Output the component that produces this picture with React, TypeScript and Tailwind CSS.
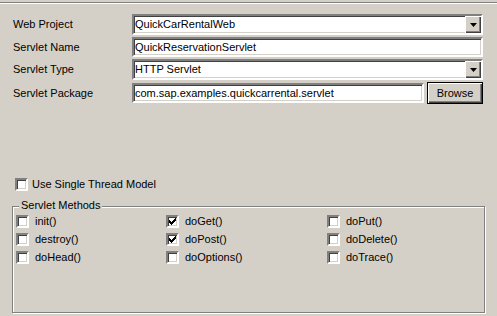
import type { ReactNode } from "react";

const sunken =
    "border-2 border-t-[#808080] border-l-[#808080] border-r-white border-b-white shadow-[inset_1px_1px_0_#404040,inset_-1px_-1px_0_#d4d0c8]";

const Combo = ({ value }: { value: string }) => (
    <div className={`flex-1 h-[21px] bg-white flex items-center ${sunken}`}>
        <span className="flex-1 pl-[1px] whitespace-nowrap">{value}</span>
        <div className="w-[16px] h-[17px] bg-[#d4d0c8] flex items-center justify-center shadow-[inset_1px_1px_0_#ffffff,inset_-1px_-1px_0_#404040,inset_-2px_-2px_0_#808080]">
            <svg width="7" height="4" viewBox="0 0 7 4">
                <path d="M0 0h7L3.5 4z" fill="#000" />
            </svg>
        </div>
    </div>
);

const TextBox = ({ value }: { value: string }) => (
    <div className={`flex-1 h-[20px] bg-white flex items-center ${sunken}`}>
        <span className="pl-[1px] whitespace-nowrap">{value}</span>
    </div>
);

const Row = ({ label, children, className }: { label: string; children: ReactNode; className?: string }) => (
    <div className={`flex items-center ${className ?? ""}`}>
        <span className="w-[119px] shrink-0">{label}</span>
        <div className="flex-1 flex items-center gap-[3px]">{children}</div>
    </div>
);

const CheckBox = ({ label, checked, gap = "gap-[6px]" }: { label: string; checked?: boolean; gap?: string }) => (
    <div className={`flex items-center ${gap}`}>
        <div className={`w-[13px] h-[13px] bg-white flex items-center justify-center ${sunken}`}>
            {checked && (
                <svg width="7" height="7" viewBox="0 0 7 7" shapeRendering="crispEdges">
                    <path d="M6 0h1v3h-1v1h-1v1h-1v1h-1v1h-1v-1h-1v-1h-1v-3h1v1h1v1h1v-1h1v-1h1z" fill="#000" />
                </svg>
            )}
        </div>
        <span className="leading-none">{label}</span>
    </div>
);

export default function App() {
    return (
        <div className="w-[497px] h-[316px] bg-[#d4d0c8] text-black text-[11px] font-['Liberation_Sans',Arial,sans-serif] pt-[2px] overflow-hidden">
            <div className="h-[2px] border-t border-t-[#808080] border-b border-b-white" />

            <div className="pl-[13px] pr-[14px] pt-[10px] flex flex-col">
                <Row label="Web Project">
                    <Combo value="QuickCarRentalWeb" />
                </Row>
                <Row label="Servlet Name" className="mt-[2px]">
                    <TextBox value="QuickReservationServlet" />
                </Row>
                <Row label="Servlet Type" className="mt-[2px]">
                    <Combo value="HTTP Servlet" />
                </Row>
                <Row label="Servlet Package" className="mt-[2px]">
                    <TextBox value="com.sap.examples.quickcarrental.servlet" />
                    <button className="w-[56px] h-[22px] bg-[#d4d0c8] border border-black shadow-[inset_1px_1px_0_#ffffff,inset_-1px_-1px_0_#404040,inset_-2px_-2px_0_#808080] text-[11px] leading-none">
                        Browse
                    </button>
                </Row>
            </div>

            <div className="pl-[15px] mt-[74px]">
                <CheckBox label="Use Single Thread Model" gap="gap-[4px]" />
            </div>

            <div className="relative ml-[12px] w-[473px] h-[107px] mt-[15px] border border-[#808080] shadow-[inset_1px_1px_0_#ffffff,1px_1px_0_#ffffff]">
                <span className="absolute -top-[7px] left-[6px] px-[2px] bg-[#d4d0c8] leading-none">Servlet Methods</span>
                <div className="grid grid-cols-[150px_161px_1fr] pl-[3px] pt-[8px] gap-y-[5px]">
                    <CheckBox label="init()" />
                    <CheckBox label="doGet()" checked />
                    <CheckBox label="doPut()" />
                    <CheckBox label="destroy()" />
                    <CheckBox label="doPost()" checked />
                    <CheckBox label="doDelete()" />
                    <CheckBox label="doHead()" />
                    <CheckBox label="doOptions()" />
                    <CheckBox label="doTrace()" />
                </div>
            </div>
        </div>
    );
}
